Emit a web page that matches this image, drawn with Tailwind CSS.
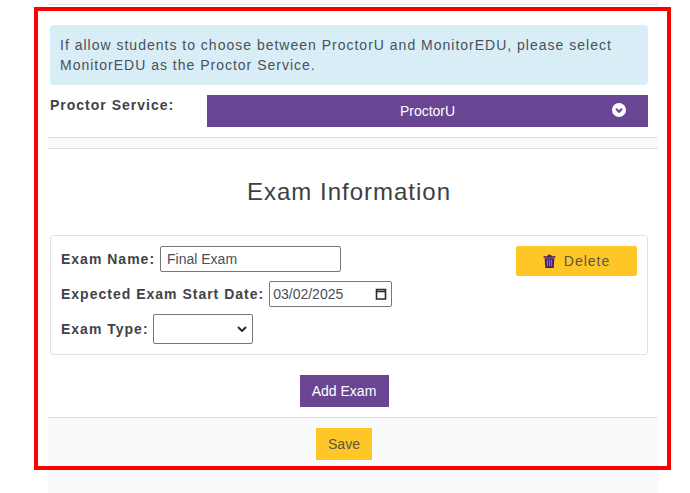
<!DOCTYPE html>
<html lang="en">
<head>
    <meta charset="UTF-8">
    <title>Exam Information</title>
    <script src="https://cdn.jsdelivr.net/npm/@tailwindcss/browser@4"></script>
</head>
<body class="bg-white font-['Liberation_Sans',Arial,sans-serif] text-[#212529] overflow-hidden">
    <div class="relative h-[493px] w-[690px]">
        <!-- Page column -->
        <div class="ml-[48px] w-[610px] h-[493px] flex flex-col">
            <div class="h-[5px] bg-[#f8f9fa] border-b border-[#dee2e6]"></div>

            <div class="pl-[2px] pr-[10px] pt-[20px]">
                <!-- Alert -->
                <div class="h-[60px] rounded-[4px] bg-[#d9edf7] px-[10px] py-[10px] text-[14px] leading-[20px] tracking-[1px] text-[#495057]">
                    If allow students to choose between ProctorU and MonitorEDU, please select MonitorEDU as the Proctor Service.
                </div>

                <!-- Proctor service -->
                <div class="mt-[10px] flex items-start">
                    <label class="w-[157px] pt-[1px] text-[14px] leading-[18px] font-bold tracking-[1px] text-[#3f4347]">Proctor Service:</label>
                    <div class="relative flex h-[32px] flex-1 items-center justify-center bg-[#6a4593] text-[14px] text-white">
                        <span>ProctorU</span>
                        <svg class="absolute right-[22px] top-[8px] h-[14px] w-[14px]" viewBox="0 0 14 14">
                            <circle cx="7" cy="7" r="7" fill="#fff"/>
                            <path d="M4 5.8 7 8.8 10 5.8" fill="none" stroke="#6a4593" stroke-width="2"/>
                        </svg>
                    </div>
                </div>
            </div>

            <div class="mt-[10px] h-[12px] bg-[#f8f9fa] border-y border-[#dee2e6]"></div>

            <h2 class="mt-[29px] pr-[8px] text-center text-[24px] leading-[28px] font-normal tracking-[1px] text-[#3c4043]">Exam Information</h2>

            <!-- Exam card -->
            <div class="mt-[29px] ml-[2px] mr-[10px] h-[120px] rounded-[3px] border border-[#e2e2e2] pl-[10px] pr-[10px] pt-[10px] flex justify-between">
                <div class="flex flex-col items-start text-[14px] font-bold tracking-[1px] text-[#3f4347]">
                    <div class="flex items-center gap-[5px] h-[26px]">
                        <label>Exam Name:</label>
                        <input type="text" value="Final Exam" class="h-[26px] w-[181px] rounded-[2px] border border-[#767676] px-[6px] text-[14px] font-normal tracking-normal text-[#495057]">
                    </div>
                    <div class="mt-[9px] flex items-center gap-[5px] h-[26px]">
                        <label>Expected Exam Start Date:</label>
                        <div class="flex h-[26px] w-[123px] items-center justify-between rounded-[2px] border border-[#767676] pl-[3px] pr-[4px] text-[14px] font-normal tracking-normal text-[#495057]">
                            <span>03/02/2025</span>
                            <svg class="h-[12px] w-[12px]" viewBox="0 0 12 12"><path d="M1.5 1.5h9v9.5h-9zM1.5 3.5h9" fill="none" stroke="#2b2b2b" stroke-width="1.6"/></svg>
                        </div>
                    </div>
                    <div class="mt-[7px] flex items-center gap-[4px] h-[30px]">
                        <label>Exam Type:</label>
                        <div class="relative h-[30px] w-[100px] rounded-[2px] border border-[#767676]">
                            <svg class="absolute right-[5px] top-[11px] h-[6px] w-[10px]" viewBox="0 0 10 6"><path d="M1 1 5 5 9 1" fill="none" stroke="#2b2b2b" stroke-width="2"/></svg>
                        </div>
                    </div>
                </div>
                <button class="flex h-[30px] w-[121px] items-center justify-center gap-[8px] rounded-[2px] bg-[#ffc627] text-[14px] tracking-[1px] text-[#5a5546]">
                    <svg class="h-[14px] w-[13px]" viewBox="0 0 12 13">
                        <path d="M0.5 2h11v1.4h-11zM4 2 4.6 0.6h2.8L8 2z" fill="#3f1d78"/>
                        <path d="M1.5 4h9l-.6 9H2.1z" fill="#3f1d78"/>
                        <path d="M4 5.2v6.4M6 5.2v6.4M8 5.2v6.4" stroke="#b9993f" stroke-width=".8"/>
                    </svg>
                    Delete
                </button>
            </div>

            <div class="mt-[20px] flex justify-center pr-[18px]">
                <button class="h-[32px] w-[89px] bg-[#6a4593] text-[14px] text-white">Add Exam</button>
            </div>

            <!-- Footer -->
            <div class="mt-[10px] flex-1 bg-[#f8f9fa] border-t border-[#dee2e6] pt-[10px]">
                <div class="flex justify-center pr-[18px]">
                    <button class="h-[32px] w-[56px] bg-[#ffc627] text-[14px] text-[#5a5546]">Save</button>
                </div>
            </div>
        </div>

        <!-- Annotation frame over the page -->
        <div class="absolute left-[34px] top-[7px] h-[463px] w-[637px] border-4 border-[#ff0000] pointer-events-none"></div>
    </div>
</body>
</html>
